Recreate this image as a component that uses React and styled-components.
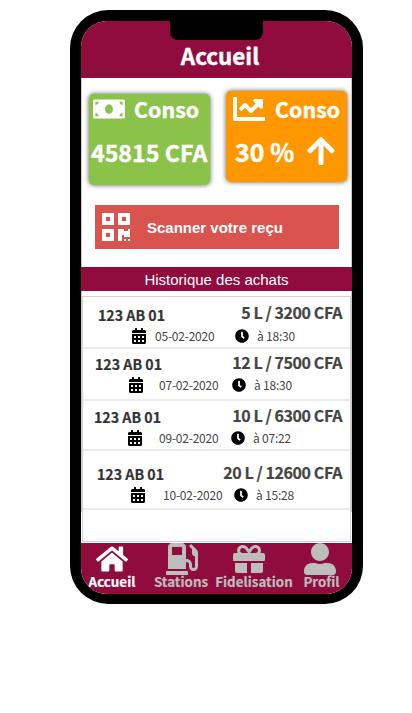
import React from "react";
import styled, { createGlobalStyle } from "styled-components";
import {
  FaArrowUp, FaCalendarAlt, FaChartLine, FaClock, FaGasPump,
  FaGift, FaHome, FaMoneyBill, FaQrcode, FaUserAlt,
} from "react-icons/fa";

const GlobalStyle = createGlobalStyle`
  * { box-sizing: border-box; }
  body { margin: 0; background: #fff; }
  svg { display: block; flex: none; }
`;

const Phone = styled.main`
  width: 293px;
  height: 594px;
  margin: 10px 0 0 70px;
  padding: 11px 11px 10px;
  border-radius: 38px;
  background: #000;
  font-family: "Noto Sans CJK SC", "Noto Sans", sans-serif;
`;

const Screen = styled.div`
  display: flex;
  flex-direction: column;
  height: 573px;
  border-radius: 26px;
  overflow: hidden;
  background: #fff;
`;

const Header = styled.header`
  display: flex;
  flex-direction: column;
  align-items: center;
  height: 57px;
  background: #900c3f;
`;

const Notch = styled.div`
  width: 93px;
  height: 19px;
  border-radius: 0 0 8px 8px;
  background: #000;
`;

const Title = styled.h1`
  margin: 0 0 0 7px;
  color: #fff;
  font-size: 22.4px;
  line-height: 30px;
  font-weight: 700;
  -webkit-text-stroke: 0.4px;
`;

const Content = styled.div`
  display: flex;
  flex-direction: column;
  height: 465px;
  background:
    linear-gradient(#c8c8c8, #c8c8c8) 0 0 / 1px 434px no-repeat,
    linear-gradient(#c8c8c8, #c8c8c8) 100% 0 / 1px 434px no-repeat;
`;

const Cards = styled.section`
  display: flex;
  gap: 16px;
  padding: 13px 0 0 8px;
  height: 127px;
`;

const Card = styled.article`
  width: 121px;
  height: 91px;
  margin-top: ${(p) => p.$top}px;
  border-radius: 5px;
  background: ${(p) => p.$color};
  box-shadow: 0 0 5px rgba(0, 0, 0, 0.65);
  color: #fff;
  -webkit-text-stroke: 0.4px;
`;

const CardHead = styled.div`
  display: flex;
  align-items: center;
  gap: ${(p) => p.$gap}px;
  height: 32px;
  margin-top: ${(p) => p.$shift}px;
  padding-left: ${(p) => p.$left}px;
  font-size: 21.4px;
  font-weight: 700;
  line-height: 32px;
  white-space: nowrap;
`;

const CardValue = styled.div`
  display: flex;
  align-items: center;
  gap: 11px;
  height: 34px;
  margin-top: ${(p) => p.$top}px;
  padding-left: ${(p) => p.$left}px;
  font-size: ${(p) => p.$size}px;
  font-weight: 700;
  line-height: 34px;
  white-space: nowrap;
`;

const ScanButton = styled.button`
  display: flex;
  align-items: center;
  gap: 15px;
  width: 244px;
  height: 44px;
  margin: 0 0 18px 14px;
  padding: 0 0 0 5px;
  border: 0;
  background: #d9534f;
  color: #fff;
  font: 700 15px "Liberation Sans", sans-serif;
`;

const Heading = styled.h2`
  margin: 0 0 5px;
  height: 24px;
  background: #900c3f;
  color: #fff;
  font: 400 15px/25px "Liberation Sans", sans-serif;
  text-align: center;
`;

const List = styled.ul`
  width: 269px;
  height: 246px;
  margin: 0 0 0 1px;
  padding: 0;
  border: 1px solid #d3d3d3;
  list-style: none;
`;

const Row = styled.li`
  height: ${(p) => p.$height}px;
  padding-top: ${(p) => p.$top}px;
  border-bottom: 2px solid #ebebeb;
`;

const Summary = styled.div`
  display: flex;
  justify-content: space-between;
  height: 22px;
  padding: 0 8px 0 ${(p) => p.$left}px;
  color: #444;
  font-size: 16px;
  font-weight: 700;
  line-height: 22px;
  white-space: nowrap;
  -webkit-text-stroke: 0.2px;
`;

const Plate = styled.span`
  padding-top: ${(p) => p.$drop}px;
  color: #333;
  font-size: 14.2px;
`;

const Price = styled.span`
  margin-top: -1px;
  letter-spacing: -0.42px;
`;

const Details = styled.div`
  display: grid;
  grid-template-columns: ${(p) => p.$columns};
  align-items: center;
  height: 20px;
  margin-top: ${(p) => p.$top}px;
  color: #444;
  font-size: 12px;
  letter-spacing: -0.22px;
  line-height: 20px;
  white-space: nowrap;
  svg { color: #000; }
`;

const TabBar = styled.nav`
  display: grid;
  grid-template-columns: 62px 76px 70px 65px;
  height: 51px;
  background: #900c3f;
`;

const Tab = styled.a`
  display: flex;
  flex-direction: column;
  align-items: center;
  color: ${(p) => (p.$active ? "#fff" : "#bdbdbd")};
  font-size: 13.4px;
  font-weight: 700;
  line-height: 13px;
  white-space: nowrap;
  -webkit-text-stroke: 0.2px;
  svg { margin-right: ${(p) => p.$nudge}px; }
`;

const purchases = [
  { plate: "123 AB 01", price: "5 L / 3200 CFA", date: "05-02-2020", time: "à 18:30", height: 52, top: 5, left: 15, drop: 2, gap: 2, columns: "48px 24px 80px 22px auto" },
  { plate: "123 AB 01", price: "12 L / 7500 CFA", date: "07-02-2020", time: "à 18:30", height: 52, top: 3, left: 12, drop: 1, gap: 1, columns: "45px 31px 73px 22px auto" },
  { plate: "123 AB 01", price: "10 L / 6300 CFA", date: "09-02-2020", time: "à 07:22", height: 50, top: 4, left: 11, drop: 1, gap: 1, columns: "44px 32px 72px 22px auto" },
  { plate: "123 AB 01", price: "20 L / 12600 CFA", date: "10-02-2020", time: "à 15:28", height: 59, top: 11, left: 14, drop: 1, gap: 1, columns: "47px 33px 71px 22px auto" },
];

const tabs = [
  { label: "Accueil", Icon: FaHome, active: true, nudge: 0 },
  { label: "Stations", Icon: FaGasPump, nudge: -2 },
  { label: "Fidelisation", Icon: FaGift, nudge: 10 },
  { label: "Profil", Icon: FaUserAlt, nudge: 4 },
];

export default function App() {
  return (
    <>
      <GlobalStyle />
      <Phone>
        <Screen>
          <Header>
            <Notch />
            <Title>Accueil</Title>
          </Header>
          <Content>
            <Cards>
              <Card $color="#8bc34a" $top={3}>
                <CardHead $left={4} $gap={9} $shift={-1}><FaMoneyBill size={32} />Conso</CardHead>
                <CardValue $left={2} $top={10} $size={23.2}>45815 CFA</CardValue>
              </Card>
              <Card $color="#ff9800" $top={0}>
                <CardHead $left={7} $gap={10} $shift={2}><FaChartLine size={32} /><span>Conso</span></CardHead>
                <CardValue $left={9} $top={9} $size={25}>30 %<FaArrowUp size={32} /></CardValue>
              </Card>
            </Cards>
            <ScanButton><FaQrcode size={32} />Scanner votre reçu</ScanButton>
            <Heading>Historique des achats</Heading>
            <List>
              {purchases.map((p) => (
                <Row key={p.date} $height={p.height} $top={p.top}>
                  <Summary $left={p.left}>
                    <Plate $drop={p.drop}>{p.plate}</Plate>
                    <Price>{p.price}</Price>
                  </Summary>
                  <Details $top={p.gap} $columns={p.columns}>
                    <span />
                    <FaCalendarAlt size={16} />
                    <span>{p.date}</span>
                    <FaClock size={14} />
                    <span>{p.time}</span>
                  </Details>
                </Row>
              ))}
            </List>
          </Content>
          <TabBar>
            {tabs.map(({ label, Icon, active, nudge }) => (
              <Tab key={label} $active={active} $nudge={nudge}><Icon size={32} />{label}</Tab>
            ))}
          </TabBar>
        </Screen>
      </Phone>
    </>
  );
}
